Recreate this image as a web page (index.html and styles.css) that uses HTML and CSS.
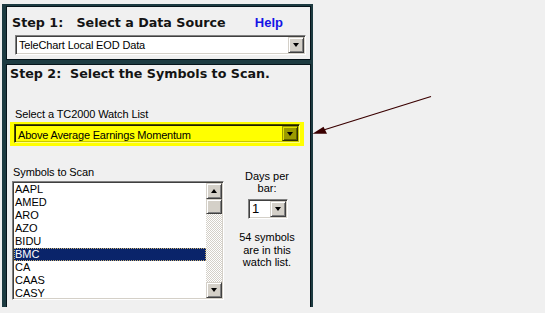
FILE: index.html
```html
<!DOCTYPE html>
<html>
<head>
<meta charset="utf-8">
<link rel="stylesheet" href="styles.css">
</head>
<body>
<div class="frame">
  <section class="panel panel-one">
    <div class="head-row">
      <h1 class="step">Step 1:   Select a Data Source</h1>
      <span class="help">Help</span>
    </div>
    <div class="combo combo-source">
      <span class="combo-text">TeleChart Local EOD Data</span>
      <span class="btn"><span class="tri-down"></span></span>
    </div>
  </section>
  <section class="panel panel-two">
    <h1 class="step step-two">Step 2:  Select the Symbols to Scan.</h1>
    <div class="label label-watch">Select a TC2000 Watch List</div>
    <div class="hilite">
      <div class="combo combo-yellow">
        <span class="combo-text">Above Average Earnings Momentum</span>
        <span class="btn btn-olive"><span class="tri-down"></span></span>
      </div>
    </div>
    <div class="scan-row">
      <div class="scan-left">
        <div class="label label-symbols">Symbols to Scan</div>
        <div class="listbox">
          <ul class="items">
            <li>AAPL</li>
            <li>AMED</li>
            <li>ARO</li>
            <li>AZO</li>
            <li>BIDU</li>
            <li class="sel">BMC</li>
            <li>CA</li>
            <li>CAAS</li>
            <li>CASY</li>
          </ul>
          <div class="vscroll">
            <span class="btn sbtn"><span class="tri-up"></span></span>
            <span class="btn thumb"></span>
            <span class="track"></span>
            <span class="btn sbtn"><span class="tri-down"></span></span>
          </div>
        </div>
      </div>
      <div class="scan-right">
        <div class="note">Days per<br>bar:</div>
        <div class="combo combo-days">
          <span class="combo-text days-text">1</span>
          <span class="btn"><span class="tri-down"></span></span>
        </div>
        <div class="note note-count">54 symbols<br>are in this<br>watch list.</div>
      </div>
    </div>
  </section>
</div>
<svg class="annot" width="545" height="313" viewBox="0 0 545 313">
  <line x1="431" y1="96.5" x2="322" y2="130.5" stroke="#3a0000" stroke-width="1.3"/>
  <polygon points="312.5,133.8 323.5,126.8 327,133.8" fill="#3a0000"/>
</svg>
</body>
</html>
```

FILE: styles.css
```css
html, body {
  margin: 0;
  padding: 0;
}
body {
  background: #f0f0f0;
  width: 545px;
  height: 313px;
  overflow: hidden;
  position: relative;
  font-family: "Liberation Sans", Arial, sans-serif;
  font-size: 11px;
  color: #000;
}
.frame {
  margin: 4px 0 0 2px;
  width: 311px;
  height: 303px;
  box-sizing: border-box;
  background: #1d3b41;
  padding: 2px 2px 0 4px;
  display: flex;
  flex-direction: column;
  gap: 4px;
}
.panel {
  background: #f0f0f0;
  border: 1px solid #06141a;
}
.panel-one {
  padding: 8px 4px 0 5px;
  box-sizing: content-box;
  height: 44px;
}
.panel-two {
  flex: 1;
  border-bottom: none;
  padding: 1px 0 0 3px;
  overflow: hidden;
}
.head-row {
  display: flex;
  justify-content: space-between;
  align-items: baseline;
  padding-right: 23px;
}
.step {
  margin: 0;
  font-family: "DejaVu Sans", Verdana, sans-serif;
  font-weight: bold;
  font-size: 12.7px;
  line-height: 15px;
  white-space: pre;
  color: #141414;
}
.help {
  font-family: "Liberation Sans", Arial, sans-serif;
  font-weight: bold;
  font-size: 13px;
  line-height: 15px;
  color: #1414e6;
}
.combo {
  display: flex;
  align-items: stretch;
  box-sizing: border-box;
  background: #fff;
  border: 1px solid;
  border-color: #808080 #ffffff #ffffff #808080;
  box-shadow: inset 1px 1px #404040, inset -1px -1px #d4d0c8;
  padding: 1px;
}
.combo-text {
  flex: 1;
  padding-left: 2px;
  line-height: 16px;
  white-space: nowrap;
  overflow: hidden;
}
.combo-source {
  margin: 5px 0 0 3px;
  width: 291px;
  height: 20px;
}
.combo-source .combo-text {
  letter-spacing: -0.15px;
}
.btn {
  display: flex;
  align-items: center;
  justify-content: center;
  width: 16px;
  box-sizing: border-box;
  background: #d4d0c8;
  border: 1px solid;
  border-color: #d4d0c8 #404040 #404040 #d4d0c8;
  box-shadow: inset 1px 1px #ffffff, inset -1px -1px #808080;
}
.tri-down {
  width: 0;
  height: 0;
  border-left: 3.5px solid transparent;
  border-right: 3.5px solid transparent;
  border-top: 4px solid #000;
}
.tri-up {
  width: 0;
  height: 0;
  border-left: 3.5px solid transparent;
  border-right: 3.5px solid transparent;
  border-bottom: 4px solid #000;
}
.label {
  line-height: 13px;
  letter-spacing: -0.1px;
}
.label-watch {
  margin: 27px 0 0 5px;
}
.hilite {
  margin-top: 1px;
  width: 294px;
  height: 24px;
  box-sizing: border-box;
  background: #ffff00;
  padding: 2px 4px 3px 4px;
}
.combo-yellow {
  height: 19px;
  background: #ffff00;
  border-color: #505000 #ffff80 #ffff80 #505000;
  box-shadow: inset 1px 1px #202000, inset -1px -1px #c8c800;
}
.combo-yellow .combo-text {
  line-height: 19px;
  letter-spacing: -0.2px;
}
.btn-olive {
  background: #9a9a00;
  border-color: #9a9a00 #303000 #303000 #9a9a00;
  box-shadow: inset 1px 1px #e0e000, inset -1px -1px #606000;
}
.scan-row {
  display: flex;
  margin: 20px 0 0 2px;
}
.scan-left {
  width: 212px;
}
.label-symbols {
  padding-left: 1px;
}
.listbox {
  margin-top: 2px;
  width: 212px;
  height: 119px;
  box-sizing: border-box;
  background: #fff;
  border: 1px solid;
  border-color: #808080 #ffffff #ffffff #808080;
  box-shadow: inset 1px 1px #404040, inset -1px -1px #d4d0c8;
  padding: 1px;
  display: flex;
}
.items {
  list-style: none;
  margin: 0;
  padding: 0;
  flex: 1;
  overflow: hidden;
}
.items li {
  height: 13px;
  line-height: 13px;
  padding-left: 1px;
  white-space: nowrap;
}
.items li.sel {
  background: #0a246a;
  color: #fff;
  outline: 1px dotted #c8b070;
  outline-offset: -1px;
}
.vscroll {
  width: 16px;
  display: flex;
  flex-direction: column;
}
.sbtn {
  height: 16px;
  flex: none;
}
.thumb {
  height: 15px;
  flex: none;
}
.track {
  flex: 1;
  background: repeating-conic-gradient(#ffffff 0 25%, #d4d0c8 0 50%) 0 0 / 2px 2px;
}
.scan-right {
  width: 86px;
  padding-top: 4px;
  display: flex;
  flex-direction: column;
  align-items: center;
  text-align: center;
}
.note {
  line-height: 12px;
}
.combo-days {
  margin: 5px 0 0 2px;
  width: 40px;
  height: 20px;
}
.days-text {
  font-size: 13px;
  line-height: 16px;
  text-align: left;
}
.note-count {
  margin-top: 12px;
  line-height: 12.5px;
}
.annot {
  position: absolute;
  left: 0;
  top: 0;
  pointer-events: none;
}
```
